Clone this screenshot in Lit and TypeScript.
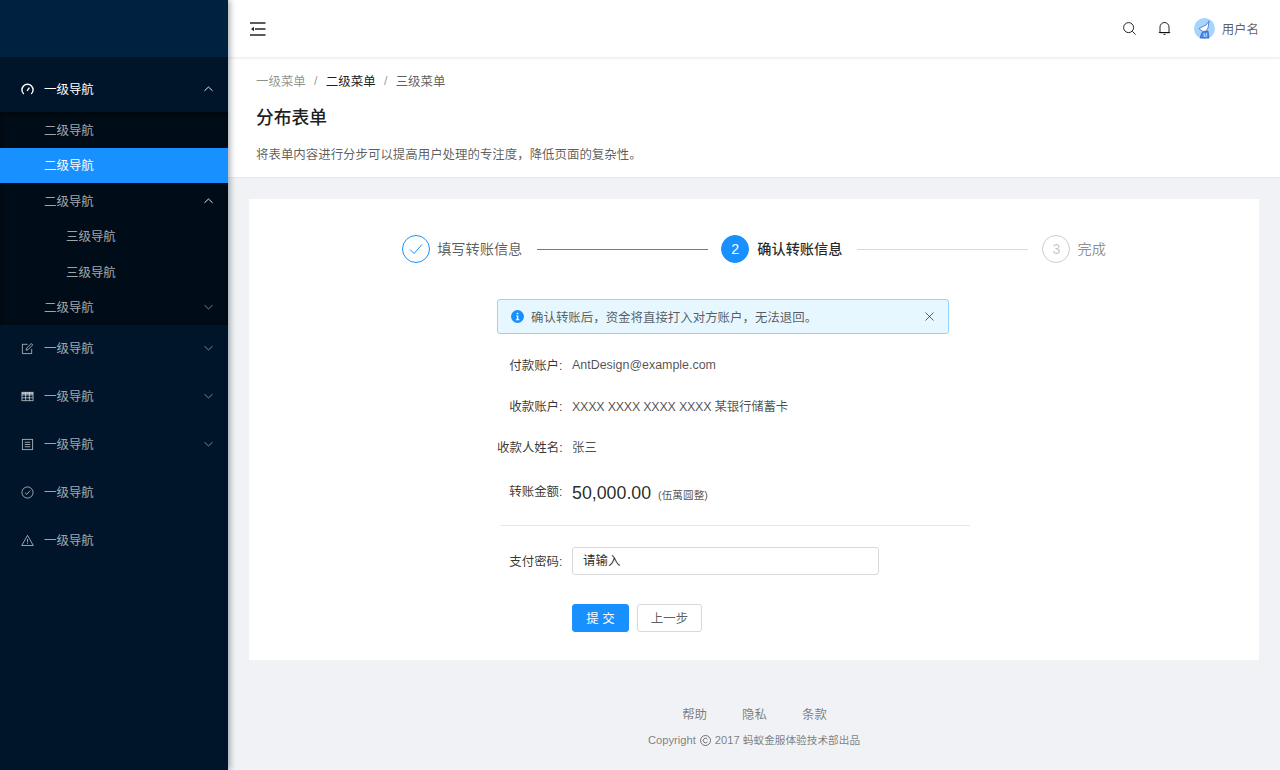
import { LitElement, html, css, svg } from "lit";
import { customElement } from "lit/decorators.js";

const icons: Record<string, unknown> = {
  gauge: svg`<path d="M3 11.8A6 6 0 1 1 11 11.8" stroke-width="1.5"/><path d="M6.6 8.4 9 5" stroke-width="1.5"/>`,
  edit: svg`<path d="M11.5 7.5V12.5H1.5V2.5H7"/><path d="M5.5 8.8 6 6.8 11 1.6 12.6 3.2 7.6 8.3Z"/>`,
  table: svg`<rect x="1" y="2.5" width="12" height="9"/><path d="M1 5.4H13M1 8.4H13M5 2.5V11.5M9 2.5V11.5"/><path d="M1 3.7H13" stroke-width="2"/>`,
  profile: svg`<rect x="1.5" y="1.5" width="11" height="11"/><path d="M4 4.6H10M4 7H10M4 9.4H10"/>`,
  check: svg`<circle cx="7" cy="7" r="6"/><path d="M4.3 7.2 6.3 9 9.8 5"/>`,
  warn: svg`<path d="M7 1.5 13.2 12.4H.8Z"/><path d="M7 5.4V9M7 10V10.9"/>`,
};

const chevron = (up: boolean) =>
  html`<svg class="chev" viewBox="0 0 10 6"><path d=${up ? "M.5 5 5 .8 9.5 5" : "M.5 1 5 5.2 9.5 1"}/></svg>`;

const menuIcon = (name: string) => html`<svg class="mi" viewBox="0 0 14 14">${icons[name]}</svg>`;

@customElement("app-root")
export class AppRoot extends LitElement {
  static styles = css`
    :host {
      display: flex;
      height: 770px;
      overflow: hidden;
      background: #f0f2f5;
      font-family: "Liberation Sans", "Noto Sans CJK SC", sans-serif;
      font-size: 12.44px;
      color: rgba(0, 0, 0, 0.65);
    }
    svg {
      fill: none;
      stroke: currentColor;
      stroke-width: 1;
    }

    .side {
      width: 228px;
      flex: none;
      background: #001529;
      box-shadow: 2px 0 6px rgba(0, 21, 41, 0.35);
      position: relative;
      z-index: 2;
      color: rgba(255, 255, 255, 0.65);
    }
    .logo {
      height: 57px;
      background: #002140;
    }
    .menu {
      padding-top: 7px;
    }
    .top {
      height: 48px;
      display: flex;
      align-items: center;
      padding: 0 15px 0 21px;
    }
    .top.open {
      color: #fff;
      box-sizing: border-box;
      padding-top: 2px;
    }
    .mi {
      width: 13px;
      height: 13px;
      margin-right: 10px;
      flex: none;
    }
    .chev {
      width: 9px;
      height: 6px;
      margin-left: auto;
      opacity: 0.8;
    }
    .top.open .chev {
      opacity: 1;
    }
    .sub {
      background: #000c17;
      box-shadow: inset 0 2px 4px rgba(0, 0, 0, 0.45);
      margin-bottom: -1px;
    }
    .item {
      height: 35.5px;
      display: flex;
      align-items: center;
      padding: 0 15px 0 44px;
    }
    .item.third {
      padding-left: 66px;
    }
    .item.sel {
      background: #1890ff;
      color: #fff;
    }
    .item.lit .chev {
      color: #fff;
      opacity: 1;
    }

    .main {
      flex: 1;
      min-width: 0;
      display: flex;
      flex-direction: column;
    }
    .bar {
      height: 57px;
      flex: none;
      background: #fff;
      box-shadow: 0 1px 3px rgba(0, 21, 41, 0.1);
      display: flex;
      align-items: center;
      padding: 0 21px 0 22px;
      position: relative;
      z-index: 1;
      color: rgba(0, 0, 0, 0.85);
    }
    .fold {
      width: 16px;
      height: 14px;
    }
    .tools {
      margin-left: auto;
      display: flex;
      align-items: center;
    }
    .tool {
      width: 15px;
      height: 15px;
      margin-right: 20px;
    }
    .tool.bell {
      margin-right: 21px;
    }
    .avatar {
      width: 21px;
      height: 21px;
      margin-left: 1px;
      margin-right: 7px;
    }
    .user {
      color: rgba(0, 0, 0, 0.65);
    }

    .phead {
      height: 121px;
      flex: none;
      box-sizing: border-box;
      background: #fff;
      border-bottom: 1px solid #e8e8e8;
      padding: 14px 28px 0;
    }
    .crumb {
      height: 20px;
      display: flex;
      align-items: center;
      gap: 8.3px;
      color: rgba(0, 0, 0, 0.65);
    }
    .crumb .first {
      color: rgba(0, 0, 0, 0.45);
    }
    .crumb .mid {
      color: rgba(0, 0, 0, 0.9);
    }
    .crumb .sep {
      color: rgba(0, 0, 0, 0.45);
    }
    .title {
      margin-top: 14px;
      font-size: 17.8px;
      line-height: 26px;
      font-weight: 500;
      color: rgba(0, 0, 0, 0.9);
    }
    .desc {
      margin-top: 14px;
      line-height: 20px;
    }

    .card {
      margin: 21px 21px 0;
      height: 461px;
      box-sizing: border-box;
      background: #fff;
      padding-top: 36px;
      flex: none;
    }
    .steps {
      display: flex;
      align-items: center;
      justify-content: center;
      height: 28px;
      font-size: 14.2px;
    }
    .dot {
      width: 28px;
      height: 28px;
      box-sizing: border-box;
      border-radius: 50%;
      border: 1px solid #1890ff;
      color: #1890ff;
      display: flex;
      align-items: center;
      justify-content: center;
      flex: none;
      font-size: 14.2px;
    }
    .dot.now {
      background: #1890ff;
      color: #fff;
    }
    .dot.todo {
      border-color: rgba(0, 0, 0, 0.2);
      color: rgba(0, 0, 0, 0.25);
    }
    .dot svg {
      width: 16px;
      height: 14px;
    }
    .lab {
      margin: -2px 0 0 7px;
    }
    .lab.now {
      margin-left: 8px;
      color: rgba(0, 0, 0, 0.85);
      font-weight: 500;
    }
    .lab.todo {
      color: rgba(0, 0, 0, 0.45);
    }
    .line {
      width: 171px;
      height: 1px;
      margin: 0 13px 0 15px;
      background: #1890ff;
    }
    .line.todo {
      margin-right: 14px;
      background: #d9d9d9;
    }

    .body {
      margin: 36px 0 0 248px;
      width: 452px;
    }
    .alert {
      height: 35px;
      box-sizing: border-box;
      background: #e6f7ff;
      border: 1px solid #91d5ff;
      border-radius: 3px;
      display: flex;
      align-items: center;
      padding: 0 14px 0 13px;
    }
    .alert .info {
      width: 13px;
      height: 13px;
      margin-right: 7px;
      stroke: none;
    }
    .alert .close {
      width: 9px;
      height: 9px;
      margin-left: auto;
      color: rgba(0, 0, 0, 0.6);
    }
    .row {
      display: flex;
      align-items: center;
    }
    .row label {
      width: 65.5px;
      text-align: right;
      margin-right: 9.5px;
      flex: none;
      color: rgba(0, 0, 0, 0.8);
      white-space: nowrap;
    }
    .rows {
      padding-top: 21px;
      display: flex;
      flex-direction: column;
      gap: 21px;
      color: rgba(0, 0, 0, 0.7);
    }
    .row.plain {
      height: 20px;
    }
    .tight {
      letter-spacing: -0.2px;
    }
    .amount {
      font-size: 17.8px;
      line-height: 26px;
      color: rgba(0, 0, 0, 0.85);
    }
    .cn {
      font-size: 10.67px;
      margin-left: 7px;
      padding-top: 3px;
    }
    .row.money {
      height: 24px;
      margin-top: 3px;
    }
    .row.money label {
      margin-top: -5px;
    }
    hr {
      border: 0;
      height: 1px;
      background: #e8e8e8;
      width: 470px;
      margin: 20px 0 21px 3px;
    }
    input {
      width: 307px;
      height: 28px;
      box-sizing: border-box;
      border: 1px solid #d9d9d9;
      border-radius: 3px;
      padding: 0 10px;
      font: inherit;
      outline: none;
    }
    input::placeholder {
      color: rgba(0, 0, 0, 0.85);
      opacity: 1;
    }
    .btns {
      display: flex;
      gap: 8px;
      margin: 29px 0 0 75px;
    }
    button {
      height: 28px;
      box-sizing: border-box;
      border-radius: 3px;
      font: inherit;
      padding: 0;
      border: 1px solid #d9d9d9;
      background: #fff;
      color: rgba(0, 0, 0, 0.65);
      width: 65px;
    }
    button.primary {
      width: 57px;
      background: #1890ff;
      border-color: #1890ff;
      color: #fff;
    }

    .foot {
      margin-top: 45px;
      text-align: center;
      color: rgba(0, 0, 0, 0.5);
    }
    .links {
      display: flex;
      justify-content: center;
      gap: 35px;
      padding-left: 1px;
      line-height: 20px;
    }
    .copy {
      margin-top: 5px;
      font-size: 10.67px;
      line-height: 20px;
      display: flex;
      justify-content: center;
      align-items: center;
    }
    .copy .en {
      font-size: 11.2px;
    }
    .copy svg {
      width: 11px;
      height: 11px;
      margin: 0 4px;
    }
  `;

  render() {
    return html`
      <aside class="side">
        <div class="logo"></div>
        <div class="menu">
          <div class="top open">${menuIcon("gauge")}一级导航${chevron(true)}</div>
          <div class="sub">
            <div class="item">二级导航</div>
            <div class="item sel">二级导航</div>
            <div class="item lit">二级导航${chevron(true)}</div>
            <div class="item third">三级导航</div>
            <div class="item third">三级导航</div>
            <div class="item">二级导航${chevron(false)}</div>
          </div>
          <div class="top">${menuIcon("edit")}一级导航${chevron(false)}</div>
          <div class="top">${menuIcon("table")}一级导航${chevron(false)}</div>
          <div class="top">${menuIcon("profile")}一级导航${chevron(false)}</div>
          <div class="top">${menuIcon("check")}一级导航</div>
          <div class="top">${menuIcon("warn")}一级导航</div>
        </div>
      </aside>
      <div class="main">
        <header class="bar">
          <svg class="fold" viewBox="0 0 16 14" stroke-width="1.4">
            <path d="M0 1H15.5M5 7H15.5M0 13H15.5" stroke-width="1.4" />
            <path d="M4 4.8 1 7 4 9.2Z" fill="currentColor" stroke="none" />
          </svg>
          <div class="tools">
            <svg class="tool" viewBox="0 0 15 15"><circle cx="6.6" cy="6.6" r="5" /><path d="M10.3 10.3 13.6 13.6" /></svg>
            <svg class="tool bell" viewBox="0 0 15 15">
              <path d="M3 11.6V6A4.5 4.5 0 0 1 12 6V11.6ZM1.8 11.6H13.2" />
              <path d="M7.5 1V1.5M6.5 13.4H8.5" />
            </svg>
            ${this.renderAvatar()}
            <span class="user">用户名</span>
          </div>
        </header>
        <section class="phead">
          <div class="crumb">
            <span class="first">一级菜单</span><span class="sep">/</span>
            <span class="mid">二级菜单</span><span class="sep">/</span>
            <span>三级菜单</span>
          </div>
          <div class="title">分布表单</div>
          <div class="desc">将表单内容进行分步可以提高用户处理的专注度，降低页面的复杂性。</div>
        </section>
        <section class="card">
          ${this.renderSteps()}
          <div class="body">
            <div class="alert">
              <svg class="info" viewBox="0 0 14 14">
                <circle cx="7" cy="7" r="7" fill="#1890ff" />
                <rect x="6.2" y="3" width="1.6" height="1.6" fill="#fff" />
                <path d="M5.5 5.8H7.9V10H9V11H5.2V10H6.3V6.8H5.5Z" fill="#fff" />
              </svg>
              <span>确认转账后，资金将直接打入对方账户，无法退回。</span>
              <svg class="close" viewBox="0 0 9 9"><path d="M.5.5 8.5 8.5M8.5.5.5 8.5" /></svg>
            </div>
            <div class="rows">
              <div class="row plain"><label>付款账户:</label><span>AntDesign@example.com</span></div>
              <div class="row plain"><label>收款账户:</label><span class="tight">XXXX XXXX XXXX XXXX 某银行储蓄卡</span></div>
              <div class="row plain"><label>收款人姓名:</label><span>张三</span></div>
              <div class="row money">
                <label>转账金额:</label><span class="amount">50,000.00</span><span class="cn">(伍萬圆整)</span>
              </div>
            </div>
            <hr />
            <div class="row"><label>支付密码:</label><input placeholder="请输入" /></div>
            <div class="btns">
              <button class="primary">提 交</button>
              <button>上一步</button>
            </div>
          </div>
        </section>
        <footer class="foot">
          <div class="links"><span>帮助</span><span>隐私</span><span>条款</span></div>
          <div class="copy">
            <span class="en">Copyright</span>
            <svg viewBox="0 0 11 11">
              <circle cx="5.5" cy="5.5" r="5" />
              <path d="M7.4 4.2A2.3 2.3 0 1 0 7.4 6.8" />
            </svg>
            <span class="en">2017&nbsp;</span>蚂蚁金服体验技术部出品
          </div>
        </footer>
      </div>
    `;
  }

  private renderSteps() {
    return html`
      <div class="steps">
        <div class="dot">
          <svg viewBox="0 0 16 14"><path d="M2 7.5 6 11.5 14 2.5" /></svg>
        </div>
        <span class="lab">填写转账信息</span>
        <div class="line"></div>
        <div class="dot now">2</div>
        <span class="lab now">确认转账信息</span>
        <div class="line todo"></div>
        <div class="dot todo">3</div>
        <span class="lab todo">完成</span>
      </div>
    `;
  }

  private renderAvatar() {
    return html`
      <svg class="avatar" viewBox="0 0 21 21">
        <circle cx="10.5" cy="10.5" r="10.5" fill="#a6d4fa" stroke="none" />
        <path d="M15 3 12 7 5 10.5 8 13 11.5 13.5 14 10Z" fill="#fff" stroke="#1f5fd0" stroke-width=".7" />
        <path d="M8 14.5 6 20 15 20 14 13Z" fill="#4a8fe8" stroke="#1f5fd0" stroke-width=".7" />
        <path d="M10 15 10.5 19M12.5 15 12 19" stroke="#fff" stroke-width=".7" />
      </svg>
    `;
  }
}
